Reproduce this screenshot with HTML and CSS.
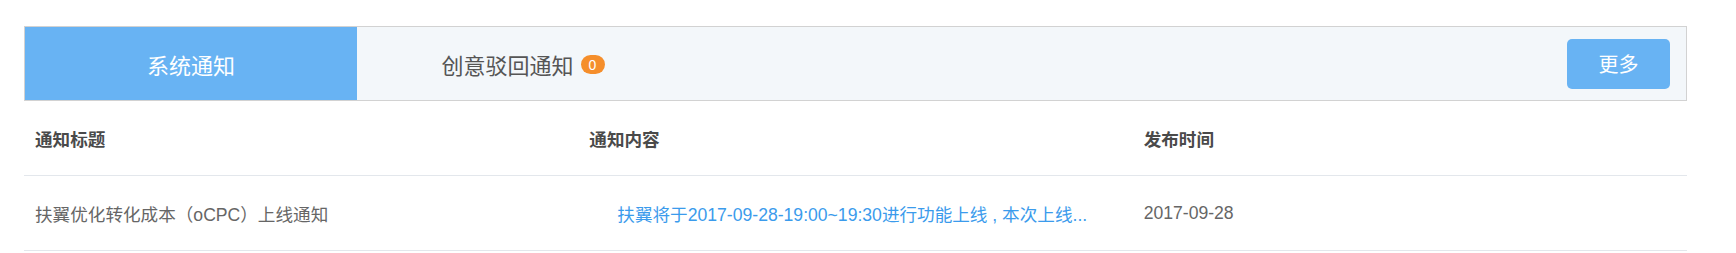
FILE: index.html
```html
<!DOCTYPE html>
<html lang="zh-CN">
<head>
<meta charset="utf-8">
<title>通知</title>
<link rel="stylesheet" href="styles.css">
</head>
<body>
<div class="panel">
  <div class="tabs">
    <div class="tab tab-active">系统通知</div>
    <div class="tab">创意驳回通知<span class="badge">0</span></div>
    <div class="tabs-spacer"></div>
    <button class="more-btn">更多</button>
  </div>
  <div class="table">
    <div class="row row-head">
      <div class="cell">通知标题</div>
      <div class="cell">通知内容</div>
      <div class="cell">发布时间</div>
    </div>
    <div class="row">
      <div class="cell">扶翼优化转化成本（oCPC）上线通知</div>
      <div class="cell"><span class="link">扶翼将于2017-09-28-19:00~19:30进行功能上线 , 本次上线...</span></div>
      <div class="cell">2017-09-28</div>
    </div>
  </div>
</div>
</body>
</html>
```

FILE: styles.css
```css
html, body {
  margin: 0;
  padding: 0;
  background: #ffffff;
}

body {
  font-family: "Liberation Sans", "Noto Sans CJK SC", sans-serif;
  color: #666666;
}

.panel {
  width: 1663px;
  margin: 26px 0 0 24px;
}

.tabs {
  display: flex;
  align-items: center;
  height: 73px;
  border: 1px solid #d2d2d2;
  background: #f3f7fa;
}

.tab {
  width: 332px;
  height: 100%;
  display: flex;
  align-items: center;
  justify-content: center;
  font-size: 22px;
  color: #555555;
}

.tab-active {
  background: #68b3f3;
  color: #ffffff;
}

.badge {
  display: inline-flex;
  align-items: center;
  justify-content: center;
  width: 24px;
  height: 19px;
  margin-left: 7px;
  margin-top: 2px;
  border-radius: 10px;
  background: #f58e2b;
  color: #ffffff;
  font-size: 14px;
  line-height: 1;
}

.tabs-spacer {
  flex: 1;
}

.more-btn {
  width: 103px;
  height: 50px;
  margin-right: 16px;
  border: none;
  outline: none;
  border-radius: 5px;
  background: #68b3f3;
  color: #ffffff;
  font-family: "Liberation Sans", "Noto Sans CJK SC", sans-serif;
  font-size: 20px;
  padding: 0;
}

.row {
  display: grid;
  grid-template-columns: 1fr 1fr 1fr;
  height: 74px;
  border-bottom: 1px solid #e3e7ec;
  align-items: center;
  font-size: 17.6px;
}

.row-head {
  color: #4a4a4a;
  font-weight: 700;
}

.cell {
  padding-left: 11px;
  white-space: nowrap;
  overflow: hidden;
}

.link {
  display: inline-block;
  margin-left: 28px;
  color: #3b9bec;
}
```
